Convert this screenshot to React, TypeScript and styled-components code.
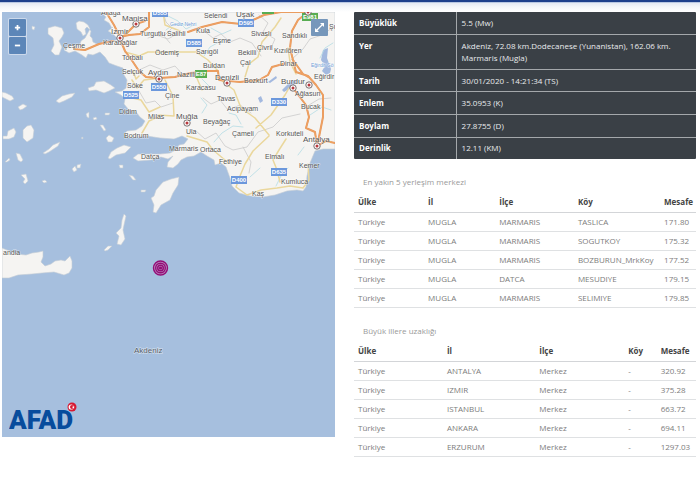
import React from "react";
import styled, { createGlobalStyle } from "styled-components";

const GlobalStyle = createGlobalStyle`
  * { box-sizing: border-box; }
  body {
    margin: 0;
    background: #fff;
    font-family: "Open Sans", sans-serif;
    font-size: 8px;
    line-height: 12px;
    color: #7c7c7c;
  }
`;

const TopBar = styled.header`
  height: 12px;
  border-top: 2px solid #1d3f8c;
  background: linear-gradient(#8ea6d2 0, #e4e9f3 1px, #f4f6fa 5px, #fff 10px);
`;

const Page = styled.main`
  display: grid;
  grid-template-columns: 333fr 342fr;
  column-gap: 19px;
  align-items: start;
  padding: 0 4px 24px 2px;
`;

const MapPanel = styled.section`
  position: relative;
  aspect-ratio: 333 / 425;
  overflow: hidden;
  background: #a6bfde;
`;

const MapDrawing = styled.svg`
  display: block;
  width: 100%;
  height: 100%;
`;

const Label = styled.text<{ $size?: number; $color?: string }>`
  font-family: "Liberation Sans", sans-serif;
  font-size: ${(p) => p.$size ?? 7}px;
  fill: ${(p) => p.$color ?? "#555"};
  stroke: #fff;
  stroke-width: 1px;
  stroke-opacity: 0.6;
  paint-order: stroke;
`;

const ShieldText = styled.text`
  font-family: "Liberation Sans", sans-serif;
  font-size: 6px;
  font-weight: 700;
  fill: #fff;
  text-anchor: middle;
`;

const ZoomControls = styled.div`
  position: absolute;
  top: 6px;
  left: 6px;
  display: grid;
  gap: 1px;
  padding: 1px;
  border-radius: 2px;
  background: #ccd9eb;
`;

const MapButton = styled.button`
  display: grid;
  place-items: center;
  width: 17px;
  height: 17px;
  padding: 0;
  border: 0;
  border-radius: 1px;
  background: #5c86b8;
  color: #fff;
  cursor: pointer;
`;

const ExpandButton = styled(MapButton)`
  position: absolute;
  top: 7px;
  right: 7px;
  background: #7697bb;
`;

const Logo = styled.div`
  position: absolute;
  left: 7px;
  bottom: 4px;
  width: 68px;
  height: 32px;
`;

const LogoText = styled.text`
  font-family: Roboto, sans-serif;
  font-size: 26px;
  font-weight: 900;
  fill: #074c9d;
`;

const Details = styled.table`
  width: 100%;
  height: 147px;
  table-layout: fixed;
  border-collapse: separate;
  border-spacing: 0;
  border-radius: 1px;
  background: #3a4046;
  color: #e9ebed;
  overflow: hidden;

  th, td {
    padding: 4px 5px;
    text-align: left;
    vertical-align: middle;
    border-bottom: 1px solid #a4a8ab;
  }
  th {
    width: 30%;
    font-weight: 700;
    color: #fff;
    border-right: 1px solid #a4a8ab;
  }
  tr:nth-child(2) > th { vertical-align: top; padding-top: 5px; }
  tr:last-child > * { border-bottom: 0; }
`;

const Info = styled.div`
  min-width: 0;
`;

const Distances = styled.section`
  margin-top: 17px;
`;

const Title = styled.h2`
  margin: 0 0 5px;
  padding: 0 9px;
  font-size: 8px;
  line-height: 12px;
  font-weight: 400;
  color: #999;
`;

const DistanceTable = styled.table`
  width: 100%;
  table-layout: fixed;
  border-collapse: separate;
  border-spacing: 0;

  th, td {
    padding: 3px 0 3px 4px;
    text-align: left;
    white-space: nowrap;
    border-bottom: 1px solid #dfe1e3;
  }
  th {
    padding-bottom: 4px;
    color: #444;
    font-weight: 700;
    border-bottom-color: #d3d5d8;
  }
`;

const Col = styled.col<{ $w: number }>`
  width: ${(p) => p.$w}%;
`;

const details: [string, string][] = [
  ["Büyüklük", "5.5 (Mw)"],
  ["Yer", "Akdeniz, 72.08 km.Dodecanese (Yunanistan), 162.06 km. Marmaris (Mugla)"],
  ["Tarih", "30/01/2020 - 14:21:34 (TS)"],
  ["Enlem", "35.0953 (K)"],
  ["Boylam", "27.8755 (D)"],
  ["Derinlik", "12.11 (KM)"],
];

const headers = ["Ülke", "İl", "İlçe", "Köy", "Mesafe"];

const villages = [
  ["Türkiye", "MUGLA", "MARMARIS", "TASLICA", "171.80"],
  ["Türkiye", "MUGLA", "MARMARIS", "SOGUTKOY", "175.32"],
  ["Türkiye", "MUGLA", "MARMARIS", "BOZBURUN_MrkKoy", "177.52"],
  ["Türkiye", "MUGLA", "DATCA", "MESUDIYE", "179.15"],
  ["Türkiye", "MUGLA", "MARMARIS", "SELIMIYE", "179.85"],
];

const provinces = [
  ["Türkiye", "ANTALYA", "Merkez", "-", "320.92"],
  ["Türkiye", "IZMIR", "Merkez", "-", "375.28"],
  ["Türkiye", "ISTANBUL", "Merkez", "-", "663.72"],
  ["Türkiye", "ANKARA", "Merkez", "-", "694.11"],
  ["Türkiye", "ERZURUM", "Merkez", "-", "1297.03"],
];

const land = [
  // Anatolia
  "M101 12L106 17L104 20L109 23L112 28L108 31L113 34L118 39L112 42L103 41L99 45L93 42L92 38L90 36L91 31L87 27L85 29L86 34L83 36L81 32L77 29L76 23L79 21L84 22L88 25L90 29L85 38L81 41L80 44L74 46L68 45L64 50L69 53L75 51L82 55L86 58L88 54L93 55L100 52L105 57L109 63L117 66L123 68L124 75L127 80L126 88L122 91L115 92L121 95L125 99L124 104L129 110L136 112L140 117L145 121L142 126L136 130L127 131L124 134L128 138L138 137L147 136L160 138L174 139L182 136L188 139L184 144L179 145L176 150L170 153L160 154L148 154L138 154L133 158L138 161L151 160L161 157L168 159L173 156L168 162L167 167L173 168L178 164L181 160L187 157L194 156L201 152L207 156L214 160L215 165L221 163L226 167L230 178L232 186L239 193L250 196L263 197L275 195L287 191L297 190L303 191L306 187L307 176L310 163L315 151L323 149L335 149V12Z",
  // Chios and neighbours
  "M48 28L55 26L62 28L64 33L62 37L59 41L62 47L59 55L55 55L51 51L54 45L53 38L48 34Z",
  "M32 26L35 27L34 30L32 29Z",
  // Samos, Ikaria
  "M88 88L94 86L96 82L104 81L111 85L115 88L109 91L104 93L96 90L89 91Z",
  "M56 101L62 96L69 94L75 93L72 97L64 101L59 103Z",
  // Cyclades
  "M2 92L6 93L12 96L14 99L10 101L6 99L2 97Z",
  "M18 107L23 104L27 106L23 109L20 110Z",
  "M23 130L27 126L31 125L34 130L33 138L27 142L23 138Z",
  "M8 131L14 128L16 132L14 137L9 139L3 139L3 136L7 136Z",
  "M16 153L20 154L23 160L21 162L18 160Z",
  "M5 162L9 158L10 160L7 162Z",
  "M43 153L49 149L53 145L60 142L58 146L49 152L45 154Z",
  "M21 175L26 174L28 181L25 184L23 182L25 179Z",
  "M42 181L45 180L47 182L44 183Z",
  "M72 169L75 166L77 170L74 172Z",
  "M77 165L81 164L80 168L77 168Z",
  "M86 114L89 112L89 118L87 117Z",
  "M93 118L96 117L97 119L94 120Z",
  "M100 125L103 125L106 130L104 131Z",
  "M106 138L109 135L114 138L112 142L108 142Z",
  "M129 175L133 176L136 180L133 180Z",
  "M141 190L146 190L145 192L141 192Z",
  "M119 165L123 165L123 168L120 168Z",
  "M105 113L110 113L109 115L105 115Z",
  "M81 138L83 137L83 139Z",
  // Kos
  "M108 158L111 152L117 148L124 145L131 147L125 153L116 155L110 159Z",
  // Rhodes
  "M151 198L154 196L156 190L163 182L171 179L179 177L178 185L173 193L170 200L161 205L156 213L153 212L154 205Z",
  // Karpathos and Kasos
  "M124 214L126 216L124 225L123 230L125 239L121 245L117 244L119 236L116 233L121 228L122 220Z",
  "M104 250L108 246L112 246L108 250L105 251Z",
  // Crete
  "M2 248L7 250L17 254L26 255L32 253L39 252L43 251L43 257L41 262L45 266L51 264L55 261L61 260L65 261L70 256L72 261L72 268L69 273L64 275L54 272L42 273L32 274L18 275L9 278L2 278Z",
];

const borders =
  "M163 12L166 22L172 28L164 36L170 43M148 38L156 35L168 39L175 35M139 70L150 65L163 70L175 66L184 76L195 72M139 91L146 103L155 101L161 107L173 103M204 31L213 38L221 34L230 42L240 38L252 43L261 56M259 15L268 23L263 32L275 39L271 48M203 98L211 104L220 100L228 110L240 105L251 113M196 131L205 139L216 133L225 146L233 150L247 147L258 132L273 127L282 118L300 114M243 147L251 162L249 173M291 60L303 49L310 39L322 35L332 28M309 105L319 99L331 98";

const rivers =
  "M166 15L178 21L186 29L194 25M166 30L174 24L186 25M204 56L210 47L223 40M211 28L222 34L231 30M202 113L207 105L201 98M214 142L222 133L233 126L243 127M202 79L211 88M241 124L236 115L229 113M250 177L260 168M276 186L282 174L288 168M298 155L304 147M320 58L325 48L333 43M310 115L322 107L331 110";

const minorRoads =
  "M132 80L137 88L144 80L160 78M128 97L141 100L149 112L160 107M133 71L136 79L139 76M125 52L139 56L148 52L165 52L184 52L196 52L208 60L218 71M196 76L202 90M217 77L234 90L241 108L255 118L269 135M165 80L173 96L174 116L158 115M256 128L271 115L285 95L289 88M269 136L253 151L245 164L240 176L236 187L247 195L261 190L277 188L290 186L303 188L309 180L308 164M286 139L279 150L273 160L277 170L280 182M142 133L149 121L160 116M187 136L197 139L207 142L213 150L225 160L228 163M245 77L249 64L258 57L262 42L275 27L281 18M163 12L165 25L180 31M288 48L290 62L296 74";

const majorRoads =
  "M106 12L114 25L120 37L129 35L140 34L149 27L149 12M120 39L127 33L136 24L145 21M120 39L125 51L133 62L139 71L146 77L159 78L175 77L190 73L208 71L218 71L219 80L240 82L259 80L268 75L272 67L283 64M74 49L85 50L99 44L113 41M188 32L202 27L222 22L241 24L253 20L264 15L281 12M308 12L298 20L292 31L290 48L293 60L303 74L310 78M293 60L296 72L308 76L316 85L323 95L323 117L319 137L317 146M293 88L299 96L306 105L309 117L306 128L315 132L317 146M281 12H304M317 146L326 141L335 143";

type Place = [string, number, number];

const towns: Place[] = [
  ["Aliağa", 101, 15], ["Çeşme", 63, 48], ["Karabağlar", 103, 45], ["Turgutlu", 140, 36], ["Salihli", 167, 36],
  ["Torbalı", 122, 60], ["Selçuk", 122, 74], ["Söke", 127, 88], ["Didim", 119, 114], ["Milas", 148, 119],
  ["Bodrum", 124, 138], ["Datça", 141, 159], ["Selendi", 204, 18], ["Kula", 196, 33], ["Eşme", 213, 43],
  ["Ödemiş", 155, 55], ["Sarıgöl", 196, 54], ["Buldan", 203, 68], ["Nazilli", 177, 77], ["Karacasu", 186, 90],
  ["Çine", 165, 98], ["Tavas", 217, 101], ["Sivaslı", 251, 36], ["Sandıklı", 282, 38], ["Çivril", 257, 50],
  ["Bekilli", 238, 55], ["Kızılören", 274, 53], ["Çal", 240, 65], ["Dinar", 280, 66], ["Bozkurt", 244, 83],
  ["Eğirdir", 314, 79], ["Ağlasun", 295, 96], ["Bucak", 301, 109], ["Acıpayam", 227, 111], ["Beyağaç", 203, 124],
  ["Çameli", 232, 136], ["Korkuteli", 276, 136], ["Ula", 186, 134], ["Marmaris", 169, 151], ["Ortaca", 200, 152],
  ["Fethiye", 219, 164], ["Elmalı", 265, 159], ["Kemer", 299, 168], ["Kumluca", 281, 184], ["Kaş", 252, 196],
  ["andia", 3, 255], ["Şu", 329, 29],
];

const cities: Place[] = [
  ["Manisa", 122, 21], ["İzmir", 111, 34], ["Aydın", 148, 75], ["Uşak", 236, 17],
  ["Denizli", 215, 80], ["Burdur", 281, 84], ["Muğla", 176, 119], ["Antalya", 303, 142],
];

const cityDots: [number, number][] = [
  [136, 24], [120, 38], [159, 79], [227, 83], [293, 88], [309, 85], [187, 123], [317, 146], [308, 12],
];

const shields: [string, number, number, string?][] = [
  ["D555", 160, 13], ["D595", 246, 23], ["D585", 194, 43], ["E87", 201, 74, "#58ad52"],
  ["E981", 310, 17, "#58ad52"], ["D550", 159, 87], ["D525", 131, 95], ["D330", 279, 102], ["D635", 279, 172], ["D400", 239, 180],
];

function EarthquakeMap() {
  return (
    <MapDrawing viewBox="2 12 333 425" preserveAspectRatio="xMinYMin slice" role="img" aria-label="Akdeniz">
      <g fill="#f5f4f2" stroke="#c4ccd5" strokeWidth="0.6" strokeLinejoin="round">
        {land.map((d) => <path key={d} d={d} />)}
      </g>
      <g fill="#a3b9df">
        <path d="M323 50L328 48L327 58L331 69L330 73L326 75L322 71L325 66L321 60Z" />
        <path d="M282 90L288 84L294 80L297 82L289 89L284 92Z" />
        <path d="M268 82L276 76L277 78L270 83Z" />
        <path d="M258 98L261 96L263 101L260 103Z" />
      </g>
      <g fill="none" strokeLinejoin="round" strokeLinecap="round">
        <path d={borders} stroke="#cacaca" strokeWidth="0.8" />
        <path d={rivers} stroke="#b4dce5" strokeWidth="0.8" />
        <path d={minorRoads} stroke="#ead79c" strokeWidth="1.5" />
        <path d={majorRoads} stroke="#e49a60" strokeWidth="2" />
        <path d={majorRoads} stroke="#f0a061" strokeWidth="1.2" />
      </g>
      <rect x="262" y="12" width="12" height="2" fill="#58ad52" />
      {shields.map(([name, x, y, fill]) => (
        <g key={name}>
          <rect x={x - (name.length > 3 ? 8 : 6)} y={y - 4} width={name.length > 3 ? 16 : 12} height="8" fill={fill ?? "#6c98dc"} />
          <ShieldText x={x} y={y + 2}>{name}</ShieldText>
        </g>
      ))}
      <Label x="170" y="26" $size={5} $color="#6d9bd6">Gediz Nehri</Label>
      <Label x="311" y="67" $size={5} $color="#6d9bd6">Eğirdir Gö</Label>
      {cityDots.map(([x, y]) => (
        <g key={`${x}-${y}`}>
          <circle cx={x} cy={y} r="3.2" fill="#fff" stroke="#574b4b" strokeWidth="0.8" />
          <circle cx={x} cy={y} r="1.5" fill="#b8383c" />
        </g>
      ))}
      {towns.map(([name, x, y]) => <Label key={name} x={x} y={y}>{name}</Label>)}
      {cities.map(([name, x, y]) => <Label key={name} x={x} y={y} $size={8}>{name}</Label>)}
      <Label x="134" y="353" $size={8} $color="#505967">Akdeniz</Label>
      <g fill="none" stroke="#940c76" strokeWidth="1.4">
        <circle cx="160.5" cy="268" r="7" fill="#b88dc0" />
        <circle cx="160.5" cy="268" r="4.8" />
        <circle cx="160.5" cy="268" r="2.8" />
        <circle cx="160.5" cy="268" r="0.9" fill="#940c76" />
      </g>
    </MapDrawing>
  );
}

function AfadLogo() {
  return (
    <Logo>
      <svg width="68" height="32" viewBox="0 0 68 32" role="img" aria-label="AFAD">
        <LogoText x="0" y="28">AFAD</LogoText>
        <circle cx="63" cy="6" r="4.5" fill="#d71932" />
        <circle cx="62.2" cy="6" r="2.6" fill="#fff" />
        <circle cx="63" cy="6" r="2" fill="#d71932" />
        <path d="M64.2 4.8L64.7 5.7L65.7 5.8L65 6.5L65.2 7.4L64.3 7L63.5 7.4L63.7 6.5L63 5.8L63.9 5.7Z" fill="#fff" />
      </svg>
    </Logo>
  );
}

function DistanceList({ title, rows, columns }: { title: string; rows: string[][]; columns: number[] }) {
  return (
    <Distances>
      <Title>{title}</Title>
      <DistanceTable aria-label={title}>
        <colgroup>{columns.map((w, i) => <Col key={i} $w={w} />)}</colgroup>
        <thead>
          <tr>{headers.map((h) => <th key={h} scope="col">{h}</th>)}</tr>
        </thead>
        <tbody>
          {rows.map((row) => (
            <tr key={row.join()}>{row.map((cell, i) => <td key={i}>{cell}</td>)}</tr>
          ))}
        </tbody>
      </DistanceTable>
    </Distances>
  );
}

export default function App() {
  return (
    <>
      <GlobalStyle />
      <TopBar />
      <Page>
        <MapPanel>
          <EarthquakeMap />
          <ZoomControls>
            <MapButton type="button" aria-label="Yakınlaştır">
              <svg width="7" height="7" viewBox="0 0 8 8"><path d="M4 1V7M1 4H7" stroke="currentColor" strokeWidth="2" /></svg>
            </MapButton>
            <MapButton type="button" aria-label="Uzaklaştır">
              <svg width="7" height="7" viewBox="0 0 8 8"><path d="M1 4H7" stroke="currentColor" strokeWidth="2" /></svg>
            </MapButton>
          </ZoomControls>
          <ExpandButton type="button" aria-label="Tam ekran">
            <svg width="11" height="11" viewBox="0 0 11 11">
              <path d="M6 1H10V5ZM5 10H1V6Z" fill="currentColor" />
              <path d="M2.5 8.5L8.5 2.5" stroke="currentColor" strokeWidth="1.3" />
            </svg>
          </ExpandButton>
          <AfadLogo />
        </MapPanel>
        <Info>
          <Details>
            <tbody>
              {details.map(([name, value]) => (
                <tr key={name}><th scope="row">{name}</th><td>{value}</td></tr>
              ))}
            </tbody>
          </Details>
          <DistanceList title="En yakın 5 yerleşim merkezi" rows={villages} columns={[20.5, 20.8, 23, 25.2, 10.5]} />
          <DistanceList title="Büyük illere uzaklığı" rows={provinces} columns={[26, 27, 26, 9.5, 11.5]} />
        </Info>
      </Page>
    </>
  );
}
